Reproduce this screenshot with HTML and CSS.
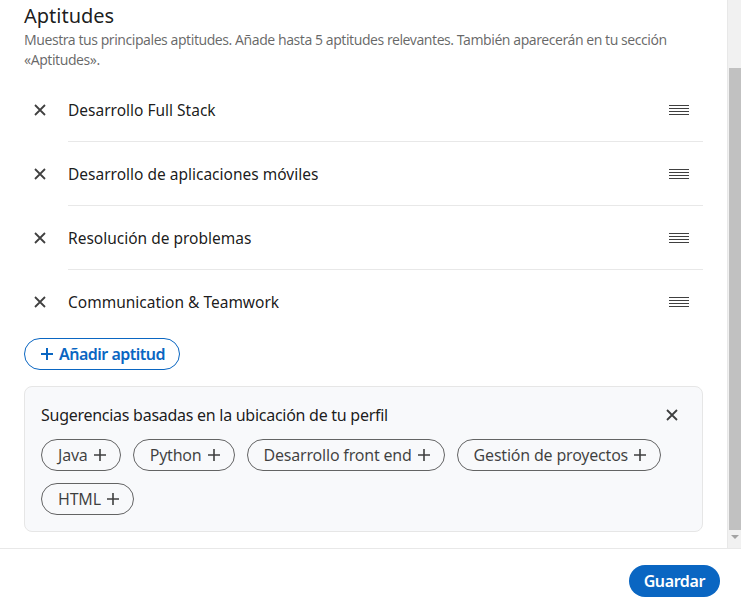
FILE: index.html
```html
<!DOCTYPE html>
<html lang="es">
<head>
<meta charset="utf-8">
<title>Aptitudes</title>
<link rel="stylesheet" href="styles.css">
</head>
<body>
<div class="modal">
  <div class="scroll-area">
    <div class="content">
      <h2 class="title">Aptitudes</h2>
      <p class="desc">Muestra tus principales aptitudes. Añade hasta 5 aptitudes relevantes. También aparecerán en tu sección «Aptitudes».</p>
      <ul class="skills">
        <li class="skill">
          <button class="remove" aria-label="Eliminar"><svg viewBox="0 0 16 16" width="16" height="16"><path d="M3 3l10 10M13 3L3 13" stroke="currentColor" stroke-width="1.8" fill="none"/></svg></button>
          <div class="skill-body"><span class="skill-name">Desarrollo Full Stack</span><svg class="handle" viewBox="0 0 24 12" width="24" height="12"><path d="M2 1.5h20M2 4.5h20M2 7.5h20M2 10.5h20" stroke="currentColor" stroke-width="1"/></svg></div>
        </li>
        <li class="skill">
          <button class="remove" aria-label="Eliminar"><svg viewBox="0 0 16 16" width="16" height="16"><path d="M3 3l10 10M13 3L3 13" stroke="currentColor" stroke-width="1.8" fill="none"/></svg></button>
          <div class="skill-body"><span class="skill-name">Desarrollo de aplicaciones móviles</span><svg class="handle" viewBox="0 0 24 12" width="24" height="12"><path d="M2 1.5h20M2 4.5h20M2 7.5h20M2 10.5h20" stroke="currentColor" stroke-width="1"/></svg></div>
        </li>
        <li class="skill">
          <button class="remove" aria-label="Eliminar"><svg viewBox="0 0 16 16" width="16" height="16"><path d="M3 3l10 10M13 3L3 13" stroke="currentColor" stroke-width="1.8" fill="none"/></svg></button>
          <div class="skill-body"><span class="skill-name">Resolución de problemas</span><svg class="handle" viewBox="0 0 24 12" width="24" height="12"><path d="M2 1.5h20M2 4.5h20M2 7.5h20M2 10.5h20" stroke="currentColor" stroke-width="1"/></svg></div>
        </li>
        <li class="skill">
          <button class="remove" aria-label="Eliminar"><svg viewBox="0 0 16 16" width="16" height="16"><path d="M3 3l10 10M13 3L3 13" stroke="currentColor" stroke-width="1.8" fill="none"/></svg></button>
          <div class="skill-body last"><span class="skill-name">Communication &amp; Teamwork</span><svg class="handle" viewBox="0 0 24 12" width="24" height="12"><path d="M2 1.5h20M2 4.5h20M2 7.5h20M2 10.5h20" stroke="currentColor" stroke-width="1"/></svg></div>
        </li>
      </ul>
      <button class="add-btn"><svg viewBox="0 0 16 16" width="16" height="16"><path d="M8 2v12M2 8h12" stroke="currentColor" stroke-width="2" fill="none"/></svg><span>Añadir aptitud</span></button>
      <section class="suggest">
        <div class="suggest-head">
          <span class="suggest-title">Sugerencias basadas en la ubicación de tu perfil</span>
          <button class="close" aria-label="Cerrar"><svg viewBox="0 0 16 16" width="16" height="16"><path d="M3 3l10 10M13 3L3 13" stroke="currentColor" stroke-width="1.8" fill="none"/></svg></button>
        </div>
        <div class="chips">
          <button class="chip"><span>Java</span><svg viewBox="0 0 16 16" width="16" height="16"><path d="M8 2v12M2 8h12" stroke="currentColor" stroke-width="1.6" fill="none"/></svg></button>
          <button class="chip"><span>Python</span><svg viewBox="0 0 16 16" width="16" height="16"><path d="M8 2v12M2 8h12" stroke="currentColor" stroke-width="1.6" fill="none"/></svg></button>
          <button class="chip"><span>Desarrollo front end</span><svg viewBox="0 0 16 16" width="16" height="16"><path d="M8 2v12M2 8h12" stroke="currentColor" stroke-width="1.6" fill="none"/></svg></button>
          <button class="chip"><span>Gestión de proyectos</span><svg viewBox="0 0 16 16" width="16" height="16"><path d="M8 2v12M2 8h12" stroke="currentColor" stroke-width="1.6" fill="none"/></svg></button>
          <button class="chip"><span>HTML</span><svg viewBox="0 0 16 16" width="16" height="16"><path d="M8 2v12M2 8h12" stroke="currentColor" stroke-width="1.6" fill="none"/></svg></button>
        </div>
      </section>
    </div>
    <div class="scrollbar">
      <div class="thumb"></div>
      <div class="arrow"></div>
    </div>
  </div>
  <footer class="footer">
    <button class="save">Guardar</button>
  </footer>
</div>
</body>
</html>
```
FILE: styles.css
```css
* { box-sizing: border-box; }
html, body { margin: 0; padding: 0; background: #fff; }
body {
  font-family: "Noto Sans", "Open Sans", sans-serif;
  color: rgba(0,0,0,.9);
  width: 741px;
  height: 610px;
  overflow: hidden;
}
button { font-family: inherit; cursor: pointer; }
.modal { display: flex; flex-direction: column; height: 610px; }
.scroll-area { display: flex; height: 548px; }
.content { flex: 1; padding: 0 24px; min-width: 0; }
.title {
  margin: 0;
  padding-top: 2px;
  font-size: 20px;
  line-height: 28px;
  font-weight: 400;
}
.desc {
  margin: 0;
  font-size: 14px;
  line-height: 20px;
  letter-spacing: -0.45px;
  color: rgba(0,0,0,.6);
}
.skills { list-style: none; margin: 8px 0 0; padding: 0; }
.skill { display: flex; align-items: stretch; }
.remove {
  width: 32px;
  height: 64px;
  margin-right: 12px;
  padding: 0;
  border: 0;
  background: none;
  color: rgba(0,0,0,.75);
  display: flex;
  align-items: center;
  justify-content: center;
}
.skill-body {
  flex: 1;
  height: 64px;
  display: flex;
  align-items: center;
  justify-content: space-between;
  border-bottom: 1px solid #e8e8e8;
  padding-right: 12px;
}
.skill-body.last { border-bottom: 0; height: 63px; }
.skill-name { font-size: 15.5px; color: rgba(0,0,0,.9); }
.handle { color: #404040; }
.add-btn {
  margin-top: 4px;
  height: 32px;
  display: inline-flex;
  align-items: center;
  gap: 4px;
  padding: 0 14px 0 14px;
  border: 1px solid #0a66c2;
  border-radius: 16px;
  background: #fff;
  color: #0a66c2;
  font-size: 16px;
  font-weight: 600;
  letter-spacing: -0.5px;
}
.suggest {
  margin-top: 16px;
  background: #f8f9fb;
  border: 1px solid #e6e6e6;
  border-radius: 8px;
  padding: 12px 16px 16px;
}
.suggest-head { display: flex; align-items: center; justify-content: space-between; }
.suggest-title { font-size: 16px; line-height: 32px; letter-spacing: -0.27px; }
.close {
  width: 24px; height: 24px; padding: 0; border: 0; background: none;
  color: rgba(0,0,0,.75);
  display: flex; align-items: center; justify-content: center;
  margin-right: 2px;
}
.chips { display: flex; flex-wrap: wrap; gap: 12px 12px; margin-top: 8px; }
.chip {
  height: 32px;
  display: inline-flex;
  align-items: center;
  gap: 4px;
  padding: 0 12px 0 16px;
  border: 1px solid rgba(0,0,0,.6);
  border-radius: 16px;
  background: transparent;
  color: rgba(0,0,0,.75);
  font-size: 16px;
  font-weight: 400;
  letter-spacing: -0.2px;
}
.scrollbar {
  width: 14px;
  background: #f1f1f1;
  border-left: 1px solid #e8e8e8;
  display: flex;
  flex-direction: column;
  padding-top: 68px;
}
.thumb { margin-left: 1px; height: 462px; background: #c1c1c1; }
.arrow {
  align-self: center;
  margin-top: 5px;
  width: 0; height: 0;
  border-left: 4px solid transparent;
  border-right: 4px solid transparent;
  border-top: 4px solid #a3a3a3;
}
.footer {
  flex: 1;
  border-top: 1px solid #e8e8e8;
  display: flex;
  justify-content: flex-end;
  align-items: flex-start;
  padding: 16px 21px 0 0;
}
.save {
  height: 32px;
  padding: 0 15px;
  border: 0;
  border-radius: 16px;
  background: #0a66c2;
  color: #fff;
  font-size: 16px;
  font-weight: 600;
  letter-spacing: -0.4px;
}
```
